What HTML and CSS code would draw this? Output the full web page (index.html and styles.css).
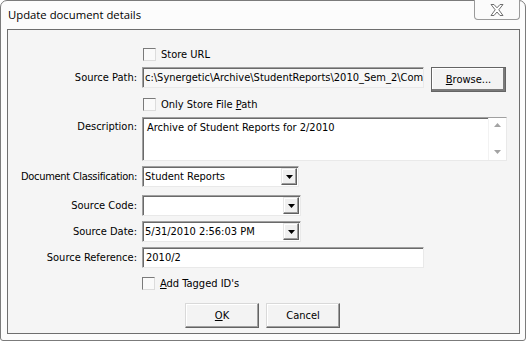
FILE: index.html
```html
<!DOCTYPE html>
<html>
<head>
<meta charset="utf-8">
<link rel="stylesheet" href="styles.css">
</head>
<body>
<div class="window">
  <div class="titlebar">
    <span class="title">Update document details</span>
    <div class="close">
      <svg width="16" height="14" viewBox="0 0 16 14"><path d="M2 1.5 L5 1.5 L8 4.8 L11 1.5 L14 1.5 L9.8 6.8 L14 12.5 L11 12.5 L8 9 L5 12.5 L2 12.5 L6.2 6.8 Z" fill="#fff" stroke="#6e6e6e" stroke-width="1" stroke-linejoin="round"/></svg>
    </div>
  </div>
  <div class="client">
    <div class="row r-storeurl">
      <div class="label"></div>
      <div class="field"><span class="check"></span><span class="ctext">Store URL</span></div>
    </div>
    <div class="row r-path">
      <div class="label">Source Path:</div>
      <div class="field">
        <div class="input path"><span class="clip">c:\Synergetic\Archive\StudentReports\2010_Sem_2\Comp</span></div>
        <div class="btn browse"><u>B</u>rowse...</div>
      </div>
    </div>
    <div class="row r-only">
      <div class="label"></div>
      <div class="field"><span class="check"></span><span class="ctext">Only Store File <u>P</u>ath</span></div>
    </div>
    <div class="row r-desc">
      <div class="label top">Description:</div>
      <div class="field">
        <div class="input desc">
          <span class="desctext">Archive of Student Reports for 2/2010</span>
          <div class="vscroll">
            <svg width="7" height="4" viewBox="0 0 7 4"><path d="M0 4 L3.5 0 L7 4 Z" fill="#a3a3a3"/></svg>
            <svg width="7" height="4" viewBox="0 0 7 4"><path d="M0 0 L3.5 4 L7 0 Z" fill="#a3a3a3"/></svg>
          </div>
        </div>
      </div>
    </div>
    <div class="row r-class">
      <div class="label tight">Document Classification:</div>
      <div class="field">
        <div class="input combo"><span class="ctxt">Student Reports</span><span class="dd"><svg width="7" height="4" viewBox="0 0 7 4"><path d="M0 0 L7 0 L3.5 4 Z" fill="#000"/></svg></span></div>
      </div>
    </div>
    <div class="row r-code">
      <div class="label">Source Code:</div>
      <div class="field">
        <div class="input combo wide"><span class="ctxt"></span><span class="dd"><svg width="7" height="4" viewBox="0 0 7 4"><path d="M0 0 L7 0 L3.5 4 Z" fill="#000"/></svg></span></div>
      </div>
    </div>
    <div class="row r-date">
      <div class="label">Source Date:</div>
      <div class="field">
        <div class="input combo wide"><span class="ctxt">5/31/2010 2:56:03 PM</span><span class="dd"><svg width="7" height="4" viewBox="0 0 7 4"><path d="M0 0 L7 0 L3.5 4 Z" fill="#000"/></svg></span></div>
      </div>
    </div>
    <div class="row r-ref">
      <div class="label">Source Reference:</div>
      <div class="field">
        <div class="input ref">2010/2</div>
      </div>
    </div>
    <div class="row r-tagged">
      <div class="label"></div>
      <div class="field"><span class="check"></span><span class="ctext"><u>A</u>dd Tagged ID's</span></div>
    </div>
    <div class="buttons">
      <div class="btn ok"><u>O</u>K</div>
      <div class="btn cancel">Cancel</div>
    </div>
  </div>
</div>
</body>
</html>
```

FILE: styles.css
```css
html, body {
  margin: 0;
  padding: 0;
  background: #ffffff;
}
body {
  width: 527px;
  height: 341px;
  overflow: hidden;
}
.window {
  box-sizing: border-box;
  width: 526px;
  height: 341px;
  border: 1px solid #7b7b7b;
  border-radius: 7px 7px 3px 3px;
  background: #fcfcfc;
  padding: 0 5px 6px 6px;
  display: flex;
  flex-direction: column;
  position: relative;
  font-family: "DejaVu Sans Condensed", "DejaVu Sans", sans-serif;
  font-size: 11px;
  color: #000;
}
.titlebar {
  height: 28px;
  display: flex;
  align-items: center;
  flex: none;
}
.title {
  font-family: "Open Sans", "Noto Sans", sans-serif;
  font-size: 11.3px;
  padding-left: 1px;
  margin-top: -1px;
  color: #000;
}
.close {
  position: absolute;
  top: -1px;
  right: 5px;
  width: 46px;
  height: 20px;
  box-sizing: border-box;
  border: 1px solid #9a9a9a;
  border-top: none;
  border-radius: 0 0 4px 4px;
  background: #fbfbfb;
  display: flex;
  align-items: center;
  justify-content: center;
}
.client {
  flex: 1;
  border: 1px solid #6e6e6e;
  background: #f5f5f5;
  display: flex;
  flex-direction: column;
  padding-top: 17px;
}
.row {
  display: flex;
  align-items: flex-start;
}
.label {
  width: 129px;
  flex: none;
  text-align: right;
  padding-right: 5px;
  box-sizing: content-box;
  white-space: nowrap;
  line-height: 21px;
}
.label.top {
  line-height: 19px;
}
.label.tight {
  letter-spacing: -0.3px;
}
.field {
  display: flex;
  align-items: flex-start;
}
.check {
  display: inline-block;
  width: 13px;
  height: 13px;
  box-sizing: border-box;
  border: 1px solid;
  border-color: #7a7a7a #dcdcdc #dcdcdc #7a7a7a;
  background: #fafafa;
  margin-left: 1px;
}
.ctext {
  margin-left: 5px;
  line-height: 13px;
}
.input {
  box-sizing: border-box;
  border: 1px solid;
  border-color: #a0a0a0 #e9e9e9 #e9e9e9 #a0a0a0;
  box-shadow: inset 1px 1px 0 #6a6a6a;
  background: #fff;
  white-space: nowrap;
  overflow: hidden;
}
.r-storeurl { margin-top: 1px; height: 13px; }
.r-storeurl .field, .r-only .field, .r-tagged .field { height: 13px; }
.r-path { margin-top: 6px; height: 25px; }
.input.path {
  width: 282px;
  height: 21px;
  line-height: 19px;
  padding-left: 2px;
  background: #f7f7f7;
}
.clip {
  display: block;
  overflow: hidden;
  white-space: nowrap;
}
.btn {
  box-sizing: border-box;
  display: flex;
  align-items: center;
  justify-content: center;
  background: #f3f3f3;
  border: 1px solid;
  border-color: #d9d9d9 #636363 #636363 #d9d9d9;
  box-shadow: inset -1px -1px 0 #a0a0a0, inset 1px 1px 0 #ffffff;
}
.btn.browse {
  width: 75px;
  height: 25px;
  margin-left: 7px;
  border-color: #646464;
  box-shadow: inset -2px -2px 0 #7a7a7a, inset 1px 1px 0 #ffffff;
  padding-bottom: 1px;
}
.r-only { margin-top: 6px; height: 13px; }
.r-desc { margin-top: 6px; height: 44px; }
.input.desc {
  width: 365px;
  height: 44px;
  position: relative;
  display: flex;
}
.desctext {
  flex: 1;
  padding: 3px 0 0 4px;
  line-height: 13px;
}
.vscroll {
  width: 17px;
  display: flex;
  flex-direction: column;
  justify-content: space-between;
  align-items: center;
  padding: 5px 0 6px;
  background: #fff;
  border-left: 1px solid #f2f2f2;
}
.vscroll svg { display: block; }
.r-class { margin-top: 5px; height: 21px; }
.input.combo {
  width: 157px;
  height: 21px;
  display: flex;
  align-items: stretch;
  padding: 1px 1px 1px 1px;
}
.input.combo.wide { width: 159px; }
.ctxt {
  flex: 1;
  line-height: 17px;
  padding-left: 1px;
  overflow: hidden;
}
.dd {
  width: 16px;
  flex: none;
  box-sizing: border-box;
  background: #f0f0f0;
  border: 1px solid;
  border-color: #e6e6e6 #5f5f5f #5f5f5f #e6e6e6;
  box-shadow: inset -1px -1px 0 #9c9c9c, inset 1px 1px 0 #ffffff;
  display: flex;
  align-items: center;
  justify-content: center;
}
.dd svg { display: block; }
.r-code { margin-top: 8px; height: 21px; }
.r-date { margin-top: 5px; height: 21px; }
.r-ref { margin-top: 5px; height: 21px; }
.input.ref {
  width: 282px;
  height: 21px;
  line-height: 19px;
  padding-left: 3px;
}
.r-tagged { margin-top: 9px; height: 13px; }
.r-tagged .check { margin-left: 0; }
.r-storeurl .label, .r-only .label, .r-tagged .label { line-height: 13px; }
.buttons {
  display: flex;
  justify-content: flex-start;
  padding-left: 177px;
  gap: 7px;
  margin-top: 13px;
}
.btn.ok, .btn.cancel {
  width: 74px;
  height: 25px;
  padding-bottom: 1px;
}
u { text-decoration: underline; text-underline-offset: 1px; }
```
